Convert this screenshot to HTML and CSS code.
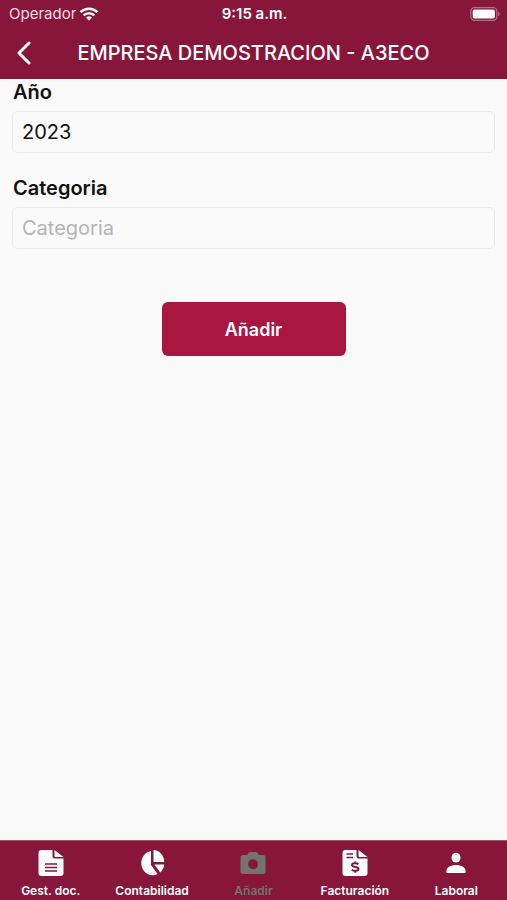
FILE: index.html
```html
<!DOCTYPE html>
<html lang="es">
<head>
  <meta charset="UTF-8" />
  <meta name="viewport" content="width=device-width, initial-scale=1.0"/>
  <title>EMPRESA DEMOSTRACION - A3ECO</title>
  <link rel="stylesheet" href="styles.css">
</head>
<body>
  <header class="header">
    <div class="status">
      <div class="carrier">
        <span>Operador</span>
        <svg width="20" height="14" viewBox="0 0 20 14" fill="none" stroke="#fff" stroke-width="2.4">
          <path d="M1.5 5.2a12.2 12.2 0 0 1 17 0"/>
          <path d="M4.6 8.4a7.7 7.7 0 0 1 10.8 0"/>
          <path d="M7 10.6a4.3 4.3 0 0 1 6 0L10 13.8z" fill="#fff" stroke="none"/>
        </svg>
      </div>
      <div class="time">9:15 a.m.</div>
      <div class="battery">
        <svg width="30" height="14" viewBox="0 0 30 14">
          <rect x=".8" y=".7" width="26" height="12.6" rx="3.6" fill="none" stroke="#b0718a" stroke-width="1.2"/>
          <rect x="2.7" y="2.5" width="22.2" height="9" rx="2" fill="#fff"/>
          <path d="M28.2 4.8c2 .8 2 3.6 0 4.4z" fill="#b0718a"/>
        </svg>
      </div>
    </div>
    <div class="navbar">
      <button class="back" type="button" aria-label="Atrás">
        <svg width="16" height="24" viewBox="0 0 16 24" fill="none" stroke="#fff" stroke-width="3" stroke-linecap="round" stroke-linejoin="round">
          <path d="M13 2L3 12l10 10"/>
        </svg>
      </button>
      <h1>EMPRESA DEMOSTRACION - A3ECO</h1>
    </div>
  </header>

  <main class="content">
    <form class="form">
      <label for="year">Año</label>
      <input type="text" id="year" value="2023" />

      <label for="category">Categoria</label>
      <input type="text" id="category" placeholder="Categoria" />

      <button class="submit" type="button">Añadir</button>
    </form>
  </main>

  <nav class="tabs">
    <a class="tab" href="#documentos">
      <svg width="28" height="28" viewBox="0 0 28 28">
        <path fill="#fff" d="M4.5 1H15.500v6.500Q15.500 9.500 17.500 9.500H26.500v14.500q0 3-3 3H4.500q-3 0-3-3V4q0-3 3-3zM17.500 1L26.500 8H18.500q-1 0-1-1z"/>
        <path stroke="#88163a" stroke-width="1.5" d="M8 15h12M8 18.500h12M8 22h12"/>
      </svg>
      <span>Gest. doc.</span>
    </a>
    <a class="tab" href="#contabilidad">
      <svg width="28" height="28" viewBox="0 0 28 28" fill="#fff">
        <path d="M13 2v14l6.500 9A11.200 12.200 0 1 1 13 2z"/>
        <path d="M15.500 1A11 12 0 0 1 26.200 13H15.500z"/>
        <path d="M16.500 15.500h9.700q-.3 4.500-4 8z"/>
      </svg>
      <span>Contabilidad</span>
    </a>
    <a class="tab active" href="#anadir">
      <svg width="28" height="28" viewBox="0 0 28 28">
        <path fill="#737373" fill-rule="evenodd" d="M4 6h4l1.500-2.200Q10.200 3 11.200 3h5.600q1 0 1.700.8L20 6h4q2.500 0 2.500 2.500v14Q26.500 25 24 25H4q-2.500 0-2.500-2.500v-14Q1.500 6 4 6zm10 4.200a5 5 0 1 0 0 10 5 5 0 0 0 0-10z"/>
      </svg>
      <span>Añadir</span>
    </a>
    <a class="tab" href="#facturacion">
      <svg width="28" height="28" viewBox="0 0 28 28">
        <path fill="#fff" d="M4.5 1H15.500v6.500Q15.500 9.500 17.500 9.500H26.500v14.500q0 3-3 3H4.500q-3 0-3-3V4q0-3 3-3zM17.500 1L26.500 8H18.500q-1 0-1-1z"/>
        <path stroke="#88163a" stroke-width="1.5" d="M5.500 5h6.500M5.500 8.500h6.500"/>
        <path fill="none" stroke="#88163a" stroke-width="1.9" d="M17.300 15.200c-1.400-1.300-6.300-1.400-6.300.8 0 2.800 6.500 1.200 6.500 4 0 2.400-5 2.200-6.800.7M14.200 12.500v2M14.200 21.500v2.200"/>
      </svg>
      <span>Facturación</span>
    </a>
    <a class="tab" href="#laboral">
      <svg width="28" height="28" viewBox="0 0 28 28" fill="#fff">
        <ellipse cx="14" cy="8.700" rx="4.500" ry="4.900"/>
        <path d="M4.500 24v-2.500c0-3.300 5-5.500 9.500-5.500s9.500 2.200 9.500 5.500V24z"/>
      </svg>
      <span>Laboral</span>
    </a>
  </nav>
</body>
</html>
```
FILE: styles.css
```css
* {
  box-sizing: border-box;
}
body {
  margin: 0;
  min-height: 100vh;
  display: flex;
  flex-direction: column;
  background-color: #fafafa;
  color: #111;
  font-family: Inter, "Liberation Sans", sans-serif;
}
.header {
  background-color: #88163a;
  color: #fff;
}
.status {
  display: grid;
  grid-template-columns: 1fr auto 1fr;
  align-items: center;
  height: 27px;
  padding: 0 7px 0 9px;
  font-size: 15px;
}
.carrier {
  display: flex;
  align-items: center;
  gap: 3px;
  color: #f0dce3;
}
.time {
  font-weight: 600;
}
.battery {
  display: flex;
  justify-content: flex-end;
}
.navbar {
  display: grid;
  grid-template-columns: 48px 1fr 48px;
  align-items: center;
  height: 52px;
}
.back {
  display: flex;
  justify-content: center;
  padding: 0;
  border: none;
  background: none;
  cursor: pointer;
}
h1 {
  margin: 0;
  text-align: center;
  font-size: 20px;
  font-weight: 500;
  white-space: nowrap;
}
.content {
  flex: 1;
}
.form {
  display: flex;
  flex-direction: column;
  padding: 0 12px;
}
label {
  line-height: 26px;
  margin-bottom: 6px;
  padding-left: 1px;
  font-size: 20px;
  font-weight: 600;
}
input {
  width: 100%;
  height: 42px;
  margin-bottom: 22px;
  padding: 0 9px;
  border: 1px solid #e8e8e8;
  border-radius: 6px;
  background-color: #fafafa;
  color: #111;
  font-family: inherit;
  font-size: 20px;
}
input::placeholder {
  color: #b4b4b4;
}
.submit {
  align-self: center;
  width: 184px;
  height: 54px;
  margin-top: 31px;
  border: none;
  border-radius: 6px;
  background-color: #a91642;
  color: #fff;
  font-family: inherit;
  font-size: 18px;
  font-weight: 600;
  cursor: pointer;
}
.tabs {
  display: grid;
  grid-template-columns: repeat(5, 1fr);
  height: 60px;
  padding-top: 8px;
  border-top: 1px solid #985870;
  background-color: #88163a;
}
.tab {
  display: flex;
  flex-direction: column;
  align-items: center;
  gap: 6px;
  color: #fff;
  font-size: 12px;
  font-weight: 600;
  line-height: 16px;
  text-decoration: none;
}
.active {
  color: #737373;
}
```
